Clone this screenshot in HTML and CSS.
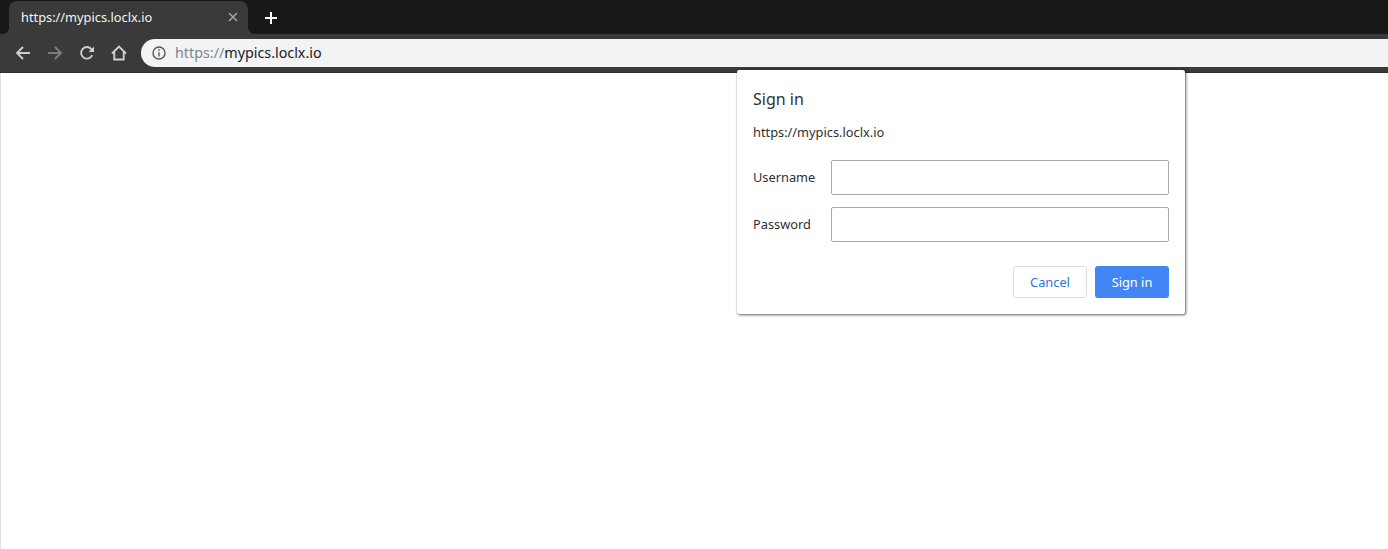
FILE: index.html
```html
<!DOCTYPE html>
<html lang="en">
<head>
<meta charset="utf-8">
<title>https://mypics.loclx.io</title>
<link rel="stylesheet" href="styles.css">
</head>
<body>
<header class="browser">
  <div class="tabstrip">
    <div class="tab">
      <span class="tab-title">https://mypics.loclx.io</span>
      <svg class="tab-close" width="10" height="10" viewBox="0 0 10 10"><path d="M1 1l8 8M9 1l-8 8"/></svg>
    </div>
    <svg class="new-tab" width="12" height="12" viewBox="0 0 12 12"><path d="M6 0v12M0 6h12"/></svg>
  </div>
  <div class="toolbar">
    <svg class="nav" width="16" height="16" viewBox="0 0 16 16"><path d="M15 8H2M8 2L2 8l6 6"/></svg>
    <svg class="nav nav-off" width="16" height="16" viewBox="0 0 16 16"><path d="M1 8h13M8 2l6 6-6 6"/></svg>
    <svg class="nav" width="16" height="16" viewBox="0 0 16 16"><path d="M13.2 10.2A5.8 5.8 0 1 1 12.3 4L14 5.8"/><path class="fill" d="M15 1.5V7H9.5z"/></svg>
    <svg class="nav" width="16" height="16" viewBox="0 0 16 16"><path d="M1 8.5L8 1.6l7 6.9M3.3 7v7.5h9.4V7"/></svg>
    <div class="omnibox">
      <svg class="info" width="14" height="14" viewBox="0 0 14 14"><circle cx="7" cy="7" r="6"/><path d="M7 6.2v4.4M7 3.2v1.7"/></svg>
      <span class="url"><span class="scheme">https://</span>mypics.loclx.io</span>
    </div>
  </div>
</header>
<main class="page"></main>
<form class="dialog">
  <h1 class="dialog-title">Sign in</h1>
  <p class="dialog-origin">https://mypics.loclx.io</p>
  <div class="fields">
    <label class="field"><span class="field-label">Username</span><input class="field-input" type="text"></label>
    <label class="field"><span class="field-label">Password</span><input class="field-input" type="password"></label>
  </div>
  <div class="actions">
    <button type="button" class="btn btn-cancel">Cancel</button>
    <button type="button" class="btn btn-primary">Sign in</button>
  </div>
</form>
</body>
</html>
```
FILE: styles.css
```css
* { box-sizing: border-box; }
html, body { margin: 0; height: 100%; }
body {
  font-family: "Noto Sans", sans-serif;
  background: #fff;
  overflow: hidden;
  display: flex;
  flex-direction: column;
}
.browser { flex: none; }
.tabstrip {
  height: 34px;
  background: #181818;
  display: flex;
  align-items: flex-end;
  padding-left: 9px;
}
.tab {
  width: 239px;
  height: 33px;
  background: #3a3a3a;
  border-radius: 8px 8px 0 0;
  display: flex;
  align-items: center;
  justify-content: space-between;
  padding: 0 10px 2px 12px;
  color: #f4f4f4;
  font-size: 12.8px;
  position: relative;
}
.tab::before,
.tab::after {
  content: "";
  position: absolute;
  bottom: 0;
  width: 6px;
  height: 6px;
}
.tab::before { left: -6px; background: radial-gradient(circle at 0 0, transparent 5.5px, #3a3a3a 6px); }
.tab::after { right: -6px; background: radial-gradient(circle at 100% 0, transparent 5.5px, #3a3a3a 6px); }
.tab-close { stroke: #a5a5a5; stroke-width: 1.5; fill: none; }
.new-tab { stroke: #fff; stroke-width: 2; fill: none; margin: 0 0 10px 17px; }
.toolbar {
  height: 39px;
  background: #3a3a3a;
  border-bottom: 1px solid #2c2c2c;
  display: flex;
  align-items: center;
  padding-left: 15px;
  gap: 16px;
}
.nav { stroke: #cfcfcf; stroke-width: 1.9; fill: none; flex: none; }
.nav-off { stroke: #7d7d7d; }
.nav .fill { fill: #cfcfcf; stroke: none; }
.omnibox {
  flex: 1;
  height: 28px;
  margin-left: -2px;
  margin-right: -1px;
  background: #f1f3f4;
  border-radius: 14px 0 0 14px;
  display: flex;
  align-items: center;
  padding: 0 0 1px 11px;
  gap: 9px;
  font-size: 14.3px;
  color: #202124;
}
.info { stroke: #55585c; stroke-width: 1.4; fill: none; flex: none; }
.scheme { color: #80868b; }
.page {
  flex: 1;
  border-left: 1px solid #e0e0e0;
  background: #fff;
}
.dialog {
  position: absolute;
  left: 737px;
  top: 70px;
  width: 448px;
  height: 244px;
  background: #fff;
  border-radius: 2px;
  box-shadow: 1px 1px 3px rgba(0,0,0,.6), 0 0 1px rgba(0,0,0,.5);
  padding: 18px 16px 16px;
  color: #303030;
  display: flex;
  flex-direction: column;
}
.dialog-title {
  margin: 0;
  font-size: 16px;
  font-weight: 400;
  line-height: 22px;
}
.dialog-origin {
  margin: 14px 0 0;
  font-size: 12.8px;
  line-height: 17px;
}
.fields {
  margin-top: 19px;
  display: flex;
  flex-direction: column;
  gap: 12px;
}
.field { display: flex; align-items: center; height: 35px; }
.field-label { width: 78px; font-size: 12.8px; padding-bottom: 2px; }
.field-input {
  width: 338px;
  height: 35px;
  border: 1px solid #a8a8a8;
  border-radius: 2px;
  background: #fff;
  padding: 0 8px;
  outline: none;
}
.actions {
  margin-top: auto;
  display: flex;
  justify-content: flex-end;
  gap: 8px;
}
.btn {
  width: 74px;
  height: 32px;
  border-radius: 3px;
  font-family: inherit;
  font-size: 12.8px;
  padding: 0;
}
.btn-cancel { background: #fff; border: 1px solid #dadce0; color: #2b74e6; }
.btn-primary { background: #4285f4; border: 0; color: #fff; }
```
